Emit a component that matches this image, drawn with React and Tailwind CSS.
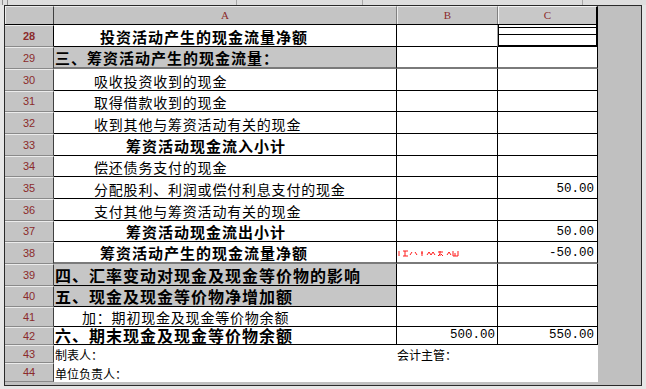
import React from "react";

const REG = "text-[14px] tracking-[0.8px] font-normal";
const B16 = "text-[15px] tracking-[1px] font-bold";
const B17 = "text-[16px] tracking-[1px] font-bold";

const rows = [
  { n: 28, h: "h-[22px]", t: "投资活动产生的现金流量净额", k: B16, pl: "pl-[46px]", pb: "pb-[2px]", active: true },
  { n: 29, h: "h-[22px]", t: "三、筹资活动产生的现金流量：", k: B16, pl: "pl-[1px]", pb: "pb-[2px]", grayA: true, grayB: true },
  { n: 30, h: "h-[22px]", t: "吸收投资收到的现金", k: REG, pl: "pl-[40px]", pb: "pb-[2px]" },
  { n: 31, h: "h-[21px]", t: "取得借款收到的现金", k: REG, pl: "pl-[40px]", pb: "pb-[2px]" },
  { n: 32, h: "h-[22px]", t: "收到其他与筹资活动有关的现金", k: REG, pl: "pl-[40px]", pb: "pb-[2px]" },
  { n: 33, h: "h-[22px]", t: "筹资活动现金流入小计", k: B16, pl: "pl-[72px]", pb: "pb-[2px]" },
  { n: 34, h: "h-[21px]", t: "偿还债务支付的现金", k: REG, pl: "pl-[40px]", pb: "pb-[2px]" },
  { n: 35, h: "h-[22px]", t: "分配股利、利润或偿付利息支付的现金", k: REG, pl: "pl-[40px]", pb: "pb-[2px]", c: "50.00" },
  { n: 36, h: "h-[22px]", t: "支付其他与筹资活动有关的现金", k: REG, pl: "pl-[40px]", pb: "pb-[2px]" },
  { n: 37, h: "h-[21px]", t: "筹资活动现金流出小计", k: B16, pl: "pl-[72px]", pb: "pb-[2px]", c: "50.00" },
  { n: 38, h: "h-[22px]", t: "筹资活动产生的现金流量净额", k: B16, pl: "pl-[46px]", pb: "pb-[2px]", c: "-50.00", red: true, grayB: true },
  { n: 39, h: "h-[22px]", t: "四、汇率变动对现金及现金等价物的影响", k: B17, pl: "pl-[1px]", pb: "pb-[2px]", grayA: true },
  { n: 40, h: "h-[21px]", t: "五、现金及现金等价物净增加额", k: B17, pl: "pl-[1px]", pb: "pb-[2px]", grayA: true },
  { n: 41, h: "h-[20px]", t: "加：期初现金及现金等价物余额", k: REG, pl: "pl-[28px]", pb: "pb-[2px]" },
  { n: 42, h: "h-[18px]", t: "六、期末现金及现金等价物余额", k: B17, pl: "pl-[1px]", pb: "pb-[1px]", b: "500.00", c: "550.00" },
];

const CJK = "font-['Noto_Sans_CJK_SC',sans-serif]";
const NUM = "font-['Liberation_Mono',monospace] text-[12.5px] leading-none";

function RowHead({ n, h, active }) {
  return (
    <div
      className={`${h} flex items-center justify-center bg-[#c4c4c4] border-t border-t-[#ececec] border-b border-b-[#8a8a8a] border-r ${
        active ? "border-r-black font-bold" : "border-r-[#404040]"
      } font-['Liberation_Sans',sans-serif] text-[11px] leading-none text-[#8b2b2b]`}
    >
      {n}
    </div>
  );
}

function Garble() {
  return (
    <svg width="62" height="7" viewBox="0 0 62 7" className="ml-[1px] mt-[8px]">
      <g stroke="#ff1a1a" strokeWidth="1" fill="none">
        <path d="M1 1v5" />
        <path d="M5 1h5M7 1v5M5 6h5" />
        <path d="M14 2l-2 3M17 2l2 3" />
        <path d="M23 3h2M24 1v5" />
        <path d="M29 5l2-3 2 3M33 5l2-3 2 3" />
        <path d="M40 2h5M42 1v5M40 6l2-2M45 6l-2-2" />
        <path d="M49 5l2-3 2 3" />
        <path d="M55 1v5h5v-5M57 3v3" />
      </g>
    </svg>
  );
}

export default function App() {
  return (
    <div className="w-[646px] h-[389px] bg-[#e6e6e6] overflow-hidden">
      <div className="h-[5px] flex bg-[#dedede]">
        <div className="w-[3px] border-r border-r-[#909090]" />
        <div className="w-[5px] border-r border-r-[#909090]" />
        <div className="w-[229px] border-r border-r-[#a8a8a8]" />
        <div className="w-[126px] border-r border-r-[#a8a8a8]" />
        <div className="w-[220px] border-r border-r-[#a8a8a8]" />
        <div className="flex-1" />
      </div>
      <div className="ml-[4px] w-[638px] h-[381px] border border-[#2a2a2a] bg-[#c0c0c0] flex">
        <div className="w-[593px] flex flex-col">
          <div className="h-[19px] grid grid-cols-[49px_343px_101px_100px] border-b border-b-black">
            <div className="bg-[#c4c4c4] border-t border-t-[#ececec] border-l border-l-[#ececec] border-r border-r-[#404040]" />
            <div className="bg-[#c4c4c4] border-t border-t-[#ececec] border-r border-r-[#808080] flex items-center justify-center font-['Liberation_Serif',serif] text-[11px] leading-none text-[#8b2b2b]">
              A
            </div>
            <div className="bg-[#c4c4c4] border-t border-t-[#ececec] border-l border-l-[#ececec] border-r border-r-[#808080] flex items-center justify-center font-['Liberation_Serif',serif] text-[11px] leading-none text-[#8b2b2b]">
              B
            </div>
            <div className="bg-[#c8c8c8] border-t border-t-[#f4f4f4] border-l border-l-[#f4f4f4] border-r-2 border-r-black flex items-center justify-center font-['Liberation_Serif',serif] text-[11px] leading-none text-[#8b2b2b]">
              C
            </div>
          </div>

          {rows.map((r) => (
            <div key={r.n} className={`${r.h} grid grid-cols-[49px_343px_101px_100px]`}>
              <RowHead n={r.n} h={r.h} active={r.active} />
              <div
                className={`${r.grayA ? "bg-[#c6c6c6]" : "bg-white"} ${
                  r.grayB ? "border-b-2 border-b-[#7a7a7a]" : "border-b border-b-black"
                } border-r border-r-black flex items-end ${r.pb} ${r.pl} ${CJK} ${r.k} leading-none text-black whitespace-nowrap`}
              >
                {r.t}
              </div>
              <div
                className={`bg-white ${
                  r.grayB ? "border-b-2 border-b-[#7a7a7a]" : "border-b border-b-black"
                } border-r ${r.active ? "border-r-[#a0a0a0]" : "border-r-black"} flex ${
                  r.red ? "items-start" : "items-end justify-end pr-[2px] pb-[3px]"
                } ${NUM} text-black`}
              >
                {r.red ? <Garble /> : r.b}
              </div>
              {r.active ? (
                <div className="bg-white border-b-2 border-b-black border-r-2 border-r-black border-l border-l-black flex flex-col">
                  <div className="h-[2px]" />
                  <div className="h-[8px] border-t border-t-black border-b border-b-black" />
                </div>
              ) : (
                <div
                  className={`bg-white ${
                    r.grayB ? "border-b-2 border-b-[#7a7a7a]" : "border-b border-b-black"
                  } border-r border-r-black flex items-end justify-end pr-[3px] pb-[3px] ${NUM} text-black`}
                >
                  {r.c}
                </div>
              )}
            </div>
          ))}

          <div className="h-[18px] grid grid-cols-[49px_343px_201px]">
            <RowHead n={43} h="h-[18px]" />
            <div className={`bg-white flex items-center pl-[1px] pt-[2px] ${CJK} text-[12px] leading-none`}>制表人：</div>
            <div className={`bg-white flex items-center pl-[0px] pt-[2px] ${CJK} text-[12px] leading-none`}>会计主管：</div>
          </div>
          <div className="h-[19px] grid grid-cols-[49px_544px]">
            <RowHead n={44} h="h-[19px]" />
            <div className={`bg-white flex items-center pl-[1px] pt-[2px] ${CJK} text-[12px] leading-none`}>单位负责人：</div>
          </div>
          <div className="flex-1" />
        </div>
        <div className="flex-1" />
      </div>
    </div>
  );
}
